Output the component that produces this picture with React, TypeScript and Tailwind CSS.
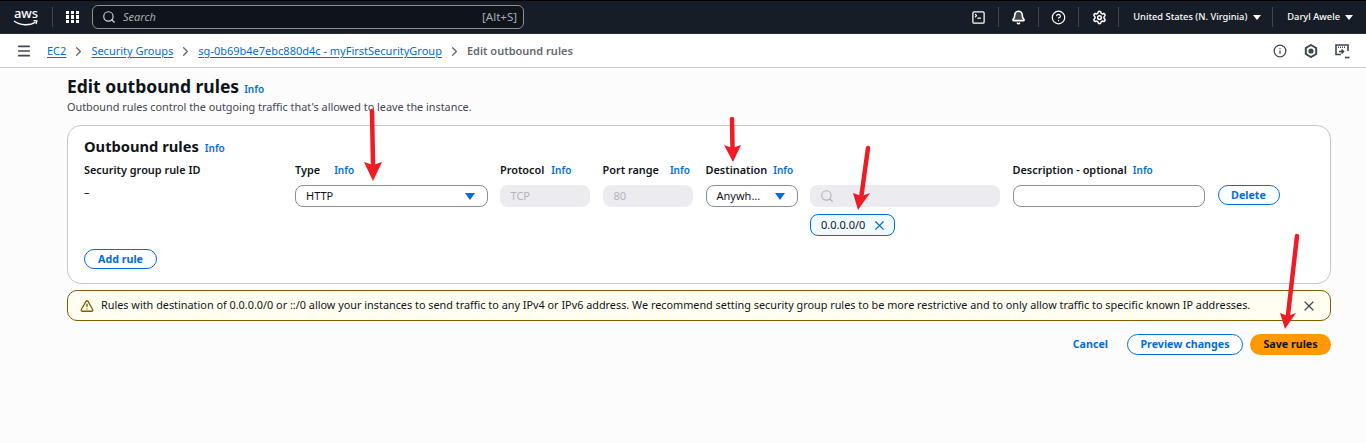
import React from 'react';
import { Search, X, ChevronRight, Info as InfoIcon, Menu, HelpCircle, Settings, Bell, SquareTerminal, TriangleAlert } from 'lucide-react';

const Info = ({ className = '' }: { className?: string }) => (
  <a className={`text-[10px] font-semibold text-[#006ce0] ${className}`}>Info</a>
);

const Caret = ({ className = 'text-[#006ce0]', w = 10, h = 7 }: { className?: string; w?: number; h?: number }) => (
  <svg width={w} height={h} viewBox="0 0 10 7" preserveAspectRatio="none" className={className}>
    <path d="M0 0h10L5 7z" fill="currentColor" />
  </svg>
);

const Sep = ({ className = '' }: { className?: string }) => <div className={`h-[20px] w-px bg-[#424650] ${className}`} />;

const Crumb = ({ children }: { children: React.ReactNode }) => (
  <a className="text-[#006ce0] underline underline-offset-2">{children}</a>
);

const Label = ({ children }: { children: React.ReactNode }) => (
  <span className="text-[10.900px] font-semibold text-[#0f141a]">{children}</span>
);

// red annotation arrows drawn over the screenshot
const Arrow = ({ x1, y1, x2, y2, hx1, hx2, hy }: { x1: number; y1: number; x2: number; y2: number; hx1: number; hx2: number; hy: number }) => {
  const mx = (hx1 + hx2) / 2;
  return (
    <g>
      <line x1={x1} y1={y1} x2={mx} y2={hy + 2} stroke="#ee1c25" strokeWidth="4.500" strokeLinecap="round" />
      <path d={`M${hx1} ${hy}L${mx} ${hy + 3}L${hx2} ${hy}L${x2} ${y2}z`} fill="#ee1c25" />
    </g>
  );
};

const App = () => {
  return (
    <div className="relative h-[443px] w-[1366px] overflow-hidden bg-[#fcfcfc] font-['Noto_Sans',sans-serif]">
      {/* top nav */}
      <header className="flex h-[34px] items-center border-t border-b border-t-black border-b-[#2c333c] bg-[#161d26] text-white">
        <div className="relative ml-[13px] flex h-[24px] w-[26px] flex-col items-center">
          <span className="text-[13px] leading-[17px] font-medium">aws</span>
          <svg width="26" height="7" viewBox="0 0 26 7" className="absolute top-[15px] left-0">
            <path d="M1 1c6 4.500 16 5 21.500 1" fill="none" stroke="#fff" strokeWidth="1.400" />
            <path d="M20.500 .6l3.500 .2-1 3.200" fill="none" stroke="#fff" strokeWidth="1.200" />
          </svg>
        </div>
        <Sep className="ml-[13px]" />
        <div className="ml-[13px] grid w-[13px] grid-cols-3 gap-[1.500px]">
          {[0, 1, 2, 3, 4, 5, 6, 7, 8].map((i) => (
            <span key={i} className="h-[3.300px] w-[3.300px] bg-white" />
          ))}
        </div>
        <div className="ml-[13px] flex h-[24px] w-[432px] items-center rounded-md border border-[#8c8c94] bg-[#0f141a] pr-[6px] pl-[9px]">
          <Search size={14} strokeWidth={2} className="text-[#d1d5db]" />
          <span className="ml-[7px] flex-1 text-[11px] text-[#a8adb5] italic">Search</span>
          <span className="text-[11.500px] text-[#a8adb5]">[Alt+S]</span>
        </div>
        <div className="ml-auto flex items-center">
          <SquareTerminal size={15} strokeWidth={2} />
          <Sep className="mx-[12px]" />
          <Bell size={15} strokeWidth={2.500} fill="currentColor" fillOpacity={0.200} />
          <Sep className="mx-[12px]" />
          <HelpCircle size={15} strokeWidth={2} />
          <Sep className="mr-[13px] ml-[12px]" />
          <Settings size={15} strokeWidth={2.400} />
          <Sep className="mr-[14px] ml-[11px]" />
          <span className="text-[9.300px] font-medium">United States (N. Virginia)</span>
          <Caret className="ml-[6px] text-white" w={8} h={5} />
          <Sep className="mr-[14px] ml-[11px]" />
          <span className="text-[9.300px] font-medium">Daryl Awele</span>
          <Caret className="mr-[13px] ml-[5px] text-white" w={8} h={5} />
        </div>
      </header>

      {/* breadcrumbs */}
      <nav className="flex h-[34px] items-center border-b border-[#c6c6cd] bg-white pt-[1px] text-[11px]">
        <Menu size={16} strokeWidth={2.400} className="ml-[16px] text-[#424650]" />
        <div className="ml-[15px] flex items-center">
          <Crumb>EC2</Crumb>
          <ChevronRight size={15} className="mx-[5px] text-[#656871]" />
          <Crumb>Security Groups</Crumb>
          <ChevronRight size={15} className="mx-[5px] text-[#656871]" />
          <Crumb>sg-0b69b4e7ebc880d4c - myFirstSecurityGroup</Crumb>
          <ChevronRight size={15} className="mx-[5px] text-[#656871]" />
          <span className="font-semibold text-[#656871]">Edit outbound rules</span>
        </div>
        <div className="mr-[16px] ml-auto flex items-center gap-[17px] text-[#424650]">
          <InfoIcon size={14} strokeWidth={2.200} />
          <svg width="14" height="14" viewBox="0 0 14 14" fill="none" stroke="currentColor" strokeWidth="2">
            <path d="M7 1l5.200 3v6L7 13l-5.200-3V4z" />
            <circle cx="7" cy="7" r="1.600" fill="currentColor" />
          </svg>
          <svg width="15" height="15" viewBox="0 0 15 15" fill="none" stroke="currentColor" strokeWidth="1.600">
            <path d="M6 10.500H1V1h12v6" />
            <path d="M3 3.200h8" strokeDasharray="1 1" />
            <path d="M4 7.500h4M6.500 5.500l2 2-2 2" />
            <path d="M10 13.500h4.500" />
          </svg>
        </div>
      </nav>

      {/* page body */}
      <main className="pr-[35px] pl-[67px]">
        <div className="mt-[5px] flex items-baseline">
          <h1 className="text-[17.500px] leading-[26px] font-bold text-[#0f141a]">Edit outbound rules</h1>
          <Info className="ml-[5px]" />
        </div>
        <p className="text-[10.850px] leading-[15px] text-[#424650]">Outbound rules control the outgoing traffic that's allowed to leave the instance.</p>

        <section className="mt-[11px] h-[159px] rounded-[14px] border border-[#c6c6cd] bg-white pt-[9px] pl-[16px]">
          <div className="flex items-baseline">
            <h2 className="text-[14.700px] leading-[22px] font-bold text-[#0f141a]">Outbound rules</h2>
            <Info className="ml-[6px]" />
          </div>
          <div className="mt-[5px] grid grid-cols-[198.500px_192.500px_90px_90.500px_92px_190px_192.500px_62px] gap-x-[12.500px]">
            <div className="flex items-center leading-[16px]"><Label>Security group rule ID</Label></div>
            <div className="flex items-center leading-[16px]"><Label>Type</Label><Info className="ml-[14px]" /></div>
            <div className="flex items-center leading-[16px]"><Label>Protocol</Label><Info className="ml-[7px]" /></div>
            <div className="flex items-center leading-[16px]"><Label>Port range</Label><Info className="ml-[11px]" /></div>
            <div className="flex items-center leading-[16px]"><Label>Destination</Label><Info className="ml-[6px]" /></div>
            <div />
            <div className="flex items-center leading-[16px]"><Label>Description - optional</Label><Info className="ml-[6px]" /></div>
            <div />

            <div className="mt-[6px] text-[11px] leading-[16px] text-[#0f141a]">–</div>
            <div className="mt-[7px] flex h-[22px] items-center justify-between rounded-lg border border-[#8c8c94] bg-white pr-[12px] pl-[10px] text-[11px] text-[#0f141a]">
              HTTP <Caret />
            </div>
            <div className="mt-[7px] flex h-[22px] items-center rounded-lg bg-[#ebebf0] pl-[10.500px] text-[11px] text-[#b4b4bb]">TCP</div>
            <div className="mt-[7px] flex h-[22px] items-center rounded-lg bg-[#ebebf0] pl-[11px] text-[11px] text-[#b4b4bb]">80</div>
            <div className="mt-[7px] flex h-[22px] items-center justify-between rounded-lg border border-[#8c8c94] bg-white pr-[12px] pl-[10px] text-[11px] text-[#0f141a]">
              Anywh... <Caret />
            </div>
            <div className="mt-[7px]">
              <div className="flex h-[22px] items-center rounded-lg bg-[#ebebf0] pl-[10px]">
                <Search size={14} strokeWidth={2} className="text-[#b4b4bb]" />
              </div>
              <div className="mt-[7px] flex h-[22px] w-[85px] items-center justify-between rounded-lg border border-[#006ce0] bg-[#f0fbff] pr-[7px] pl-[10px] text-[11px] text-[#0f141a]">
                0.0.0.0/0 <X size={15} strokeWidth={1.800} className="text-[#006ce0]" />
              </div>
            </div>
            <div className="mt-[7px] h-[22px] rounded-lg border border-[#8c8c94] bg-white" />
            <div className="mt-[7px] flex">
              <button className="h-[20px] w-[62px] rounded-full border border-[#006ce0] bg-white text-[10.700px] font-bold text-[#006ce0]">Delete</button>
            </div>
          </div>
          <button className="mt-[13px] block h-[20px] w-[73px] rounded-full border border-[#006ce0] bg-white text-[10.700px] font-bold text-[#006ce0]">Add rule</button>
        </section>

        <div className="mt-[6px] flex h-[31px] items-center rounded-[10px] border border-[#855900] bg-[#fffef0] pl-[12px] text-[#0f141a]">
          <TriangleAlert size={14} strokeWidth={2.200} className="shrink-0 text-[#855900]" />
          <span className="ml-[7px] text-[10.850px] whitespace-nowrap">Rules with destination of 0.0.0.0/0 or ::/0 allow your instances to send traffic to any IPv4 or IPv6 address. We recommend setting security group rules to be more restrictive and to only allow traffic to specific known IP addresses.</span>
          <X size={16} strokeWidth={1.800} className="mr-[13px] ml-auto text-[#424650]" />
        </div>

        <div className="mt-[13px] flex items-center justify-end">
          <a className="text-[10.700px] font-bold text-[#006ce0]">Cancel</a>
          <button className="ml-[19px] h-[21px] w-[116px] rounded-full border border-[#006ce0] bg-white text-[10.700px] font-bold text-[#006ce0]">Preview changes</button>
          <button className="ml-[7px] h-[21px] w-[81px] rounded-full bg-[#ff9900] text-[10.700px] font-bold text-[#0f141a]">Save rules</button>
        </div>
      </main>

      <svg width="1366" height="443" className="pointer-events-none absolute top-0 left-0">
        <Arrow x1={372} y1={111} x2={373} y2={181} hx1={364} hx2={382} hy={162} />
        <Arrow x1={732} y1={119} x2={733} y2={162} hx1={724} hx2={741} hy={145} />
        <Arrow x1={868} y1={148} x2={858} y2={210} hx1={853} hx2={870} hy={193} />
        <Arrow x1={1297} y1={236} x2={1285} y2={329} hx1={1280} hx2={1296} hy={313} />
      </svg>
    </div>
  );
};

export default App;
